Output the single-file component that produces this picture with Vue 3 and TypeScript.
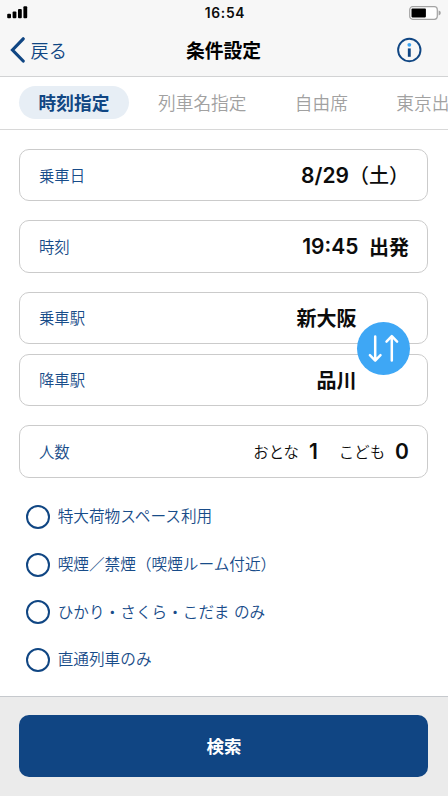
<script setup lang="ts">
import { ref } from 'vue'

const tabs: string[] = ['時刻指定', '列車名指定', '自由席', '東京出']
const activeTab = ref(0)

const options = ref([
  { label: '特大荷物スペース利用', checked: false, cls: 'luggage' },
  { label: '喫煙／禁煙（喫煙ルーム付近）', checked: false, cls: 'smoking' },
  { label: 'ひかり・さくら・こだま のみ', checked: false, cls: 'trains' },
  { label: '直通列車のみ', checked: false, cls: 'direct' },
])

const from = ref('新大阪')
const to = ref('品川')
function swap() {
  const previous = from.value
  from.value = to.value
  to.value = previous
}
</script>

<template>
  <div class="screen">
    <header class="top">
      <div class="status">
        <svg class="signal" width="21" height="13" viewBox="0 0 21 13">
          <rect x="0.2" y="7.8" width="3.8" height="4.4" rx="1" />
          <rect x="5.6" y="5.6" width="3.8" height="6.6" rx="1" />
          <rect x="11" y="3" width="3.8" height="9.2" rx="1" />
          <rect x="16.4" y="0.2" width="3.8" height="12" rx="1" />
        </svg>
        <span class="clock">16:54</span>
        <svg class="battery" width="32" height="14" viewBox="0 0 32 14">
          <rect x="0.7" y="0.7" width="27.6" height="12.6" rx="3" fill="#fff" stroke="#a3a3a3" stroke-width="1.2" />
          <rect x="2.5" y="2.6" width="14.4" height="8.8" rx="0.8" fill="#000" />
          <path d="M29.6 4.6Q31.8 5 31.8 7T29.6 9.4Z" fill="#a3a3a3" />
        </svg>
      </div>
      <nav class="navbar">
        <button class="back">
          <svg width="15" height="26" viewBox="0 0 15 26">
            <path d="M13.2 1.8L2.5 13L13.2 24" fill="none" stroke="#104683" stroke-width="3.2" stroke-linecap="round" stroke-linejoin="miter" />
          </svg>
          <span>戻る</span>
        </button>
        <h1>条件設定</h1>
        <button class="info">
          <svg width="26" height="26" viewBox="0 0 26 26">
            <circle cx="13.3" cy="13" r="11.2" fill="none" stroke="#104683" stroke-width="1.9" />
            <circle cx="13.3" cy="7.8" r="1.9" fill="#3ca4f3" />
            <path d="M13.3 11.4V19.8" stroke="#104683" stroke-width="2.9" />
          </svg>
        </button>
      </nav>
    </header>

    <div class="tabs">
      <button
        v-for="(tab, i) in tabs"
        :key="tab"
        class="tab"
        :class="{ active: i === activeTab }"
        @click="activeTab = i"
      >{{ tab }}</button>
    </div>

    <main class="form">
      <div class="card">
        <span class="label">乗車日</span>
        <span class="value"><b class="num">8/29</b><span class="weekday">（土）</span></span>
      </div>
      <div class="card">
        <span class="label">時刻</span>
        <span class="value"><b class="num">19:45</b><span class="depart">出発</span></span>
      </div>
      <div class="stations">
        <div class="card station">
          <span class="label">乗車駅</span>
          <span class="value">{{ from }}</span>
        </div>
        <div class="card station">
          <span class="label">降車駅</span>
          <span class="value">{{ to }}</span>
        </div>
        <button class="swap" @click="swap">
          <svg width="53" height="53" viewBox="0 0 53 53">
            <g fill="none" stroke="#fff" stroke-width="2.5" stroke-linecap="round" stroke-linejoin="round">
              <path d="M18.2 14.4V38.4M12.9 33.2L18.2 38.6L23.5 33.2" />
              <path d="M34.8 38.6V14.4M29.5 19.6L34.8 14.2L40.1 19.6" />
            </g>
          </svg>
        </button>
      </div>
      <div class="card">
        <span class="label">人数</span>
        <span class="people">
          <span class="kind">おとな</span><b class="count adult">1</b>
          <span class="kind">こども</span><b class="count">0</b>
        </span>
      </div>
      <div class="options">
        <div
          v-for="o in options"
          :key="o.label"
          class="option"
          :class="[o.cls, { checked: o.checked }]"
          @click="o.checked = !o.checked"
        >
          <span class="circle"></span>
          <span class="text">{{ o.label }}</span>
        </div>
      </div>
    </main>

    <footer class="footer">
      <button class="search">検索</button>
    </footer>
  </div>
</template>

<style>
body {
  margin: 0;
  background: #fff;
  overflow: hidden;
}
</style>

<style scoped>
.screen {
  width: 448px;
  height: 796px;
  display: flex;
  flex-direction: column;
  overflow: hidden;
  background: #fff;
  color: #0c0c0c;
  font-family: 'Noto Sans CJK JP', sans-serif;
  font-weight: 350;
  text-spacing-trim: space-all;
}
.screen * {
  box-sizing: border-box;
}
button {
  margin: 0;
  padding: 0;
  border: 0;
  background: none;
  font: inherit;
  color: inherit;
}
svg {
  display: block;
}
.top {
  flex: none;
  height: 77px;
  background: #f7f7f7;
  border-bottom: 1px solid #d2d3d4;
}
.status {
  height: 24px;
  display: grid;
  grid-template-columns: 1fr auto 1fr;
  align-items: center;
  padding: 1px 7px 0;
}
.clock {
  margin-left: 2px;
  font: 600 13.8px/20px Inter, sans-serif;
  letter-spacing: 0.7px;
}
.battery {
  justify-self: end;
}
.navbar {
  height: 52px;
  display: grid;
  grid-template-columns: 1fr auto 1fr;
  align-items: center;
  padding: 0 26px 0 10px;
}
.back {
  display: flex;
  align-items: center;
  gap: 5.5px;
  color: #104683;
  font-size: 18.2px;
  line-height: 26px;
}
h1 {
  margin: 0 -15px 0 0;
  font-size: 18.8px;
  line-height: 28px;
  font-weight: 700;
  color: #000;
}
.info {
  justify-self: end;
}
.tabs {
  flex: none;
  height: 53px;
  display: flex;
  align-items: center;
  padding: 0 0 2px 19px;
  border-bottom: 1px solid #d8d8d8;
  overflow: hidden;
}
.tab {
  flex: none;
  height: 33px;
  margin-right: 48.4px;
  font-size: 17.7px;
  line-height: 33px;
  color: #a1a1a1;
  white-space: nowrap;
}
.tab.active {
  width: 110px;
  margin-right: 29px;
  border-radius: 17px;
  background: #e7eef5;
  color: #104683;
  font-weight: 700;
}
.form {
  flex: 1;
  min-height: 0;
  padding: 19px 19.6px 0 19.4px;
}
.card {
  height: 52.4px;
  margin-bottom: 19px;
  padding: 0 18.5px;
  display: flex;
  align-items: center;
  justify-content: space-between;
  border: 1px solid #cbcbcb;
  border-radius: 10px;
}
.label {
  margin-top: -1px;
  font-size: 15.4px;
  color: #184c89;
}
.value {
  display: flex;
  align-items: center;
  font-size: 20px;
  line-height: 30px;
  font-weight: 700;
}
.weekday {
  font-weight: 500;
}
.num {
  padding-top: 1px;
  font: 600 21px/30px Inter, sans-serif;
}
.depart {
  margin-left: 10.5px;
}
.stations {
  position: relative;
}
.station {
  padding-right: 71px;
}
.station:first-child {
  margin-bottom: 9.6px;
}
.swap {
  position: absolute;
  right: 18.5px;
  top: 50%;
  width: 53px;
  height: 53px;
  margin-top: -26.5px;
  border-radius: 50%;
  background: #3ea7f5;
}
.people {
  display: flex;
  align-items: center;
}
.kind {
  font-size: 15.4px;
}
.count {
  margin-left: 10px;
  padding-top: 2px;
  font: 600 21px/30px Inter, sans-serif;
}
.adult {
  margin-right: 21px;
}
.options {
  margin-top: -3.5px;
  padding: 0 0 0 6.8px;
}
.option {
  height: 47.7px;
  display: flex;
  align-items: center;
  gap: 7.5px;
  color: #184c89;
  font-size: 15.65px;
  line-height: 24px;
}
.trains {
  word-spacing: 1px;
}
.text {
  margin-top: -1px;
  white-space: pre;
}
.circle {
  width: 24px;
  height: 24px;
  border: 2px solid #104683;
  border-radius: 50%;
}
.checked .circle {
  background: #104683;
}
.footer {
  flex: none;
  height: 100px;
  padding: 18px 19.6px 0 19.4px;
  border-top: 1px solid #c6c9cd;
  background: #ebebeb;
}
.search {
  display: block;
  width: 100%;
  height: 62px;
  padding-bottom: 2px;
  border-radius: 10px;
  background: #104583;
  color: #fff;
  font-size: 17.5px;
  font-weight: 700;
}
</style>
